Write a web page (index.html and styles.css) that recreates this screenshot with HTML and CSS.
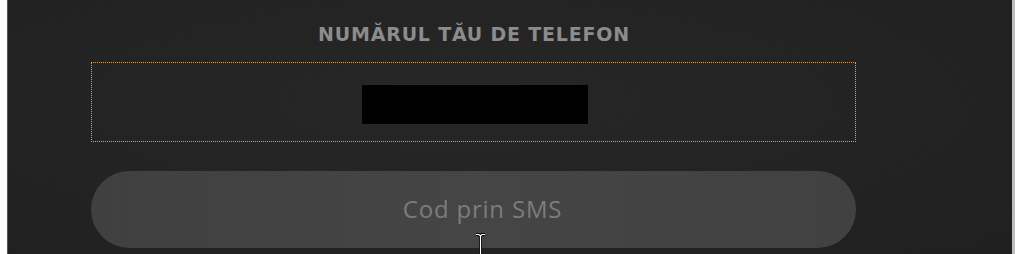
FILE: index.html
```html
<!DOCTYPE html>
<html lang="ro">
<head>
<meta charset="utf-8">
<title>Număr de telefon</title>
<link rel="stylesheet" href="styles.css">
</head>
<body>
<div class="page">
  <div class="panel">
    <form class="form">
      <div class="label">NUMĂRUL TĂU DE TELEFON</div>
      <div class="field"><div class="redacted"></div></div>
      <button type="button" class="sms">Cod prin SMS</button>
    </form>
    <svg class="cursor" width="11" height="22" viewBox="0 0 11 22">
      <path d="M1 1.5 H4 L5.5 3 L7 1.5 H10 M5.5 3 V22" fill="none" stroke="#000" stroke-width="3"/>
      <path d="M1 1.5 H4 L5.5 3 L7 1.5 H10 M5.5 3 V22" fill="none" stroke="#fff" stroke-width="1.2"/>
    </svg>
  </div>
  <div class="edge"></div>
</div>
</body>
</html>
```
FILE: styles.css
```css
html, body {
  margin: 0;
  padding: 0;
  background: #ffffff;
}
.page {
  display: flex;
  width: 1024px;
  height: 254px;
  overflow: hidden;
  padding-left: 7px;
  box-sizing: border-box;
}
.panel {
  position: relative;
  width: 1005px;
  height: 254px;
  background: radial-gradient(ellipse at 45% 40%, #272727 0%, #232323 55%, #202020 100%);
  border-left: 1px solid #555;
  box-sizing: border-box;
  padding-left: 83px;
}
.edge {
  width: 3px;
  height: 254px;
  background: #bdbdbd;
}
.form {
  width: 765px;
  display: flex;
  flex-direction: column;
  align-items: center;
  margin: 0;
}
.label {
  margin-top: 22px;
  height: 24px;
  line-height: 24px;
  font-family: "DejaVu Sans", "Open Sans", sans-serif;
  font-weight: 700;
  font-size: 19px;
  color: #8c8c8c;
  letter-spacing: 0.8px;
  padding-left: 1px;
}
.field {
  margin-top: 16px;
  width: 765px;
  height: 80px;
  box-sizing: border-box;
  border: 1px dotted #d6a832;
  display: flex;
  align-items: center;
  justify-content: center;
  padding-top: 4px;
  padding-left: 3px;
}
.redacted {
  width: 226px;
  height: 39px;
  background: #000;
}
.sms {
  margin-top: 29px;
  width: 765px;
  height: 77px;
  border: none;
  border-radius: 39px;
  background: linear-gradient(90deg, #404040 0%, #454545 50%, #414141 100%);
  color: #7c7c7c;
  font-family: "Open Sans", "Lato", sans-serif;
  font-size: 24px;
  letter-spacing: 0.8px;
  padding: 0 0 3px 18px;
}
.cursor {
  position: absolute;
  left: 467px;
  top: 233px;
}
```
